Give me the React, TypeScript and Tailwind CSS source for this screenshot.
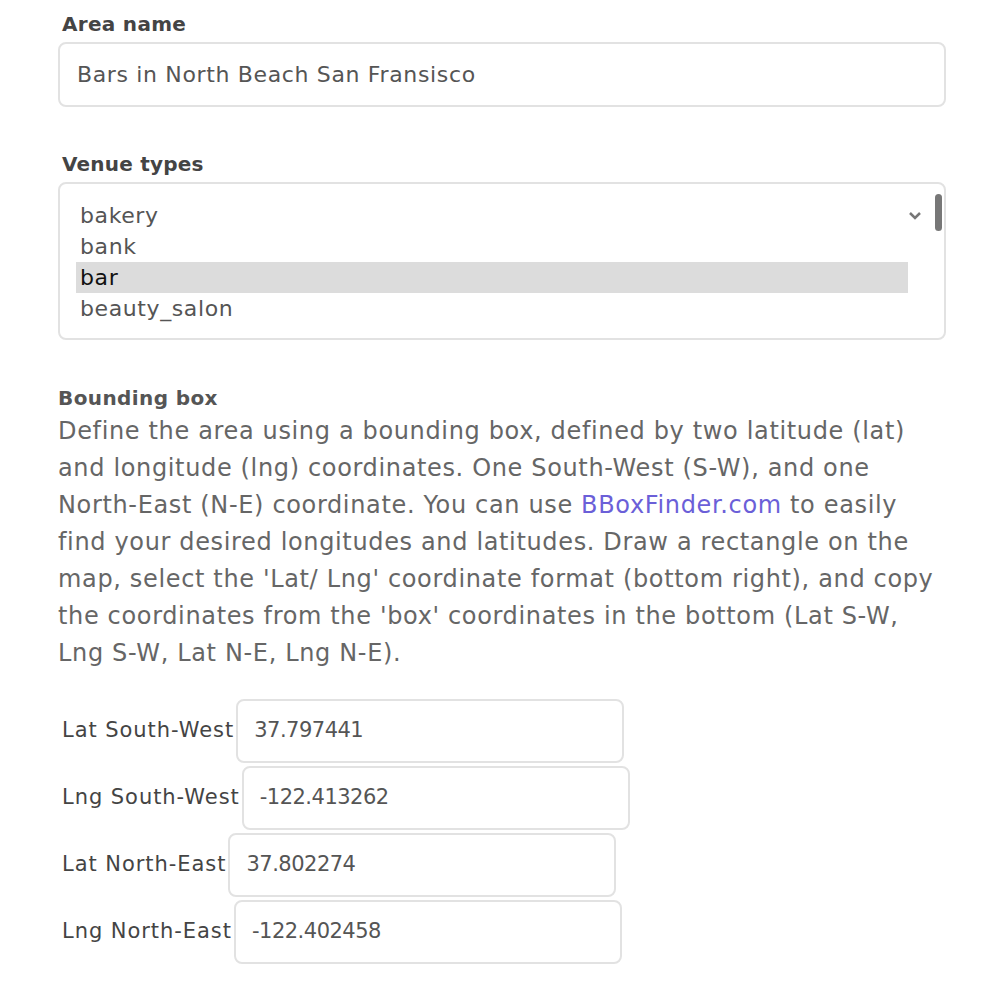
import React from "react";

const font = { fontFamily: '"DejaVu Sans", "Open Sans", sans-serif' };

function CoordRow({ label, value }: { label: string; value: string }) {
  return (
    <div className="flex items-center mb-[3px]">
      <span className="text-[21px] tracking-[0.95px] text-[#444] pl-[4px] pr-[2px] whitespace-nowrap">{label}</span>
      <div className="w-[388px] h-[64px] border-2 border-[#e2e2e2] rounded-[8px] flex items-center pl-[16px] text-[21px] text-[#555] tracking-[-0.5px]">
        {value}
      </div>
    </div>
  );
}

export default function App() {
  return (
    <div className="w-[1000px] h-[989px] bg-white px-[58px] pt-[10px]" style={font}>
      <div className="text-[20px] font-bold text-[#444] pl-[4px] leading-[28px] tracking-[0.3px]">Area name</div>
      <div className="mt-[4px] w-[888px] h-[65px] border-2 border-[#e2e2e2] rounded-[8px] flex items-center pl-[17px] text-[22px] text-[#555] tracking-[0.65px]">
        Bars in North Beach San Fransisco
      </div>

      <div className="mt-[43px] text-[20px] font-bold text-[#444] pl-[4px] leading-[28px] tracking-[0.2px]">Venue types</div>
      <div className="relative mt-[4px] w-[888px] h-[158px] border-2 border-[#e2e2e2] rounded-[8px] pt-[16px] pl-[16px] pr-[36px] text-[22px] text-[#555] tracking-[0.6px]">
        <div className="leading-[31px] pl-[4px]">bakery</div>
        <div className="leading-[31px] pl-[4px]">bank</div>
        <div className="leading-[31px] pl-[4px] bg-[#dcdcdc] text-[#111]">bar</div>
        <div className="leading-[31px] pl-[4px]">beauty_salon</div>
        <svg className="absolute left-[848px] top-[27px]" width="14" height="10" viewBox="0 0 14 10">
          <path d="M2 2 L7 7 L12 2" fill="none" stroke="#777" strokeWidth="2.5" />
        </svg>
        <div className="absolute left-[875px] top-[10px] w-[7px] h-[37px] rounded-full bg-[#777]" />
      </div>

      <div className="mt-[44px] text-[20px] font-bold text-[#555] leading-[28px] tracking-[0.4px]">Bounding box</div>
      <p className="text-[24px] text-[#666] leading-[37px] mt-[1px] whitespace-nowrap tracking-[0.65px]">
        Define the area using a bounding box, defined by two latitude (lat)
        <br />
        and longitude (lng) coordinates. One South-West (S-W), and one
        <br />
        North-East (N-E) coordinate. You can use <span className="text-[#6b5fd8]">BBoxFinder.com</span> to easily
        <br />
        find your desired longitudes and latitudes. Draw a rectangle on the
        <br />
        map, select the 'Lat/ Lng' coordinate format (bottom right), and copy
        <br />
        the coordinates from the 'box' coordinates in the bottom (Lat S-W,
        <br />
        Lng S-W, Lat N-E, Lng N-E).
      </p>

      <div className="mt-[27px]">
        <CoordRow label="Lat South-West" value="37.797441" />
        <CoordRow label="Lng South-West" value="-122.413262" />
        <CoordRow label="Lat North-East" value="37.802274" />
        <CoordRow label="Lng North-East" value="-122.402458" />
      </div>
    </div>
  );
}
